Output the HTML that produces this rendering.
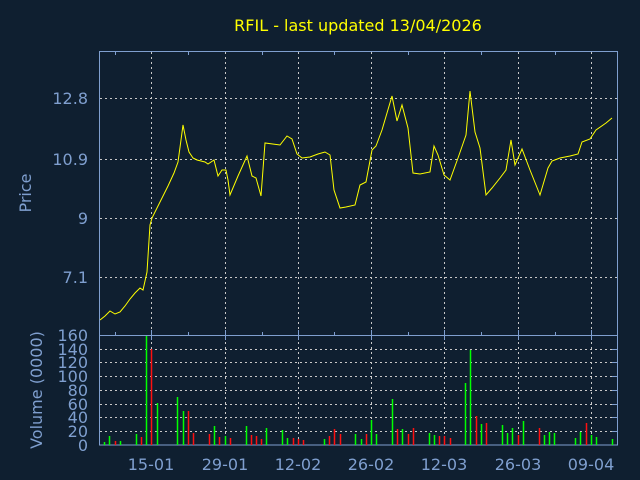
<!DOCTYPE html><html><head><style>body{margin:0;background:#0f1f30;}svg{display:block}</style></head><body>
<svg width="640" height="480" xmlns="http://www.w3.org/2000/svg" font-family="DejaVu Sans, sans-serif">
<rect width="640" height="480" fill="#0f1f30"/>
<text x="358" y="31" fill="#ffff00" font-size="16" text-anchor="middle">RFIL - last updated 13/04/2026</text>
<g stroke="#c8c8c8" stroke-dasharray="2,3" stroke-width="1">
<line x1="100" y1="98.5" x2="617" y2="98.5"/><line x1="100" y1="159.5" x2="617" y2="159.5"/><line x1="100" y1="218.5" x2="617" y2="218.5"/><line x1="100" y1="277.5" x2="617" y2="277.5"/>
<line x1="100" y1="349.5" x2="617" y2="349.5"/><line x1="100" y1="362.5" x2="617" y2="362.5"/><line x1="100" y1="376.5" x2="617" y2="376.5"/><line x1="100" y1="390.5" x2="617" y2="390.5"/><line x1="100" y1="404.5" x2="617" y2="404.5"/><line x1="100" y1="417.5" x2="617" y2="417.5"/><line x1="100" y1="431.5" x2="617" y2="431.5"/>
<line x1="151.5" y1="52" x2="151.5" y2="445"/><line x1="225.5" y1="52" x2="225.5" y2="445"/><line x1="298.5" y1="52" x2="298.5" y2="445"/><line x1="371.5" y1="52" x2="371.5" y2="445"/><line x1="444.5" y1="52" x2="444.5" y2="445"/><line x1="518.5" y1="52" x2="518.5" y2="445"/><line x1="591.5" y1="52" x2="591.5" y2="445"/>
</g>
<g stroke="#7f9fcf" stroke-width="1" fill="none">
<rect x="99.5" y="51.5" width="518" height="393.5"/>
<line x1="99.5" y1="335.5" x2="617.5" y2="335.5"/>
<path d="M115.5 52v3M188.5 52v3M262.5 52v3M334.5 52v3M408.5 52v3M481.5 52v3M555.5 52v3M115.5 335v-3M188.5 335v-3M262.5 335v-3M334.5 335v-3M408.5 335v-3M481.5 335v-3M555.5 335v-3M151.5 330v10M225.5 330v10M298.5 330v10M371.5 330v10M444.5 330v10M518.5 330v10M591.5 330v10M612 349.5h5M612 362.5h5M612 376.5h5M612 390.5h5M612 404.5h5M612 417.5h5M612 431.5h5"/>
</g>
<polyline fill="none" stroke="#ffff00" stroke-width="1" points="100,320 105,316 110,311 115,314 120,312 125,306 130,299 135,293 140,288 143,290 147,272 150,225 152,218 156,210 162,198 168,186 174,173 178,162 181,140 183,125 186,140 189,152 193,158 197,160 201,161 205,162 208,164 214,160 218,176 222,170 226,170 228,180 230,195 238,176 247,156 252,176 256,178 261,196 265,143 280,145 287,136 292,139 297,154 302,158 310,157 318,154 325,152 330,155 334,190 340,208 346,207 355,205 360,185 366,182 372,150 376,146 382,130 392,96 397,121 402,105 408,128 413,173 420,174 430,172 434,146 438,155 444,175 450,180 458,158 466,135 470,91 475,132 480,148 486,195 492,188 500,178 506,170 511,140 515,165 522,149 530,170 540,195 548,168 552,161 560,158 570,156 578,154 582,142 590,139 596,130 606,123 612,118"/>
<g stroke-width="1.5">
<g stroke="#00ff00"><path d="M104.5 445V442M109.5 445V436M120.5 445V441M136.5 445V434M146.5 445V336M157.5 445V403M177.5 445V397M183.5 445V411M214.5 445V426M225.5 445V436M246.5 445V426M266.5 445V428M282.5 445V430M287.5 445V438M324.5 445V439M355.5 445V434M361.5 445V439M371.5 445V420M376.5 445V434M392.5 445V399M402.5 445V429M429.5 445V433M434.5 445V435M465.5 445V383M470.5 445V350M481.5 445V424M502.5 445V425M507.5 445V433M512.5 445V428M523.5 445V421M544.5 445V435M549.5 445V432M554.5 445V433M575.5 445V438M580.5 445V432M591.5 445V435M596.5 445V437M612.5 445V439"/></g>
<g stroke="#ff1010"><path d="M115.5 445V441M141.5 445V437M151.5 445V349M188.5 445V411M193.5 445V433M209.5 445V434M219.5 445V437M230.5 445V438M251.5 445V435M256.5 445V436M261.5 445V439M293.5 445V438M298.5 445V439M303.5 445V440M329.5 445V436M334.5 445V429M340.5 445V434M366.5 445V434M397.5 445V429M408.5 445V434M413.5 445V428M439.5 445V436M444.5 445V436M450.5 445V438M476.5 445V416M486.5 445V423M518.5 445V435M539.5 445V428M586.5 445V423"/></g>
</g>
<g fill="#7f9fcf" font-size="16" text-anchor="end">
<text x="88" y="104">12.8</text><text x="88" y="165">10.9</text><text x="88" y="224">9</text><text x="88" y="283">7.1</text>
<text x="88" y="341">160</text><text x="88" y="355">140</text><text x="88" y="368">120</text><text x="88" y="382">100</text><text x="88" y="396">80</text><text x="88" y="410">60</text><text x="88" y="423">40</text><text x="88" y="437">20</text><text x="88" y="451">0</text>
</g>
<g fill="#7f9fcf" font-size="16" text-anchor="middle">
<text x="151" y="470">15-01</text><text x="225" y="470">29-01</text><text x="298" y="470">12-02</text><text x="371" y="470">26-02</text><text x="444" y="470">12-03</text><text x="518" y="470">26-03</text><text x="591" y="470">09-04</text>
<text transform="translate(31,193) rotate(-90)">Price</text>
<text transform="translate(42,390) rotate(-90)">Volume (0000)</text>
</g>
</svg></body></html>
